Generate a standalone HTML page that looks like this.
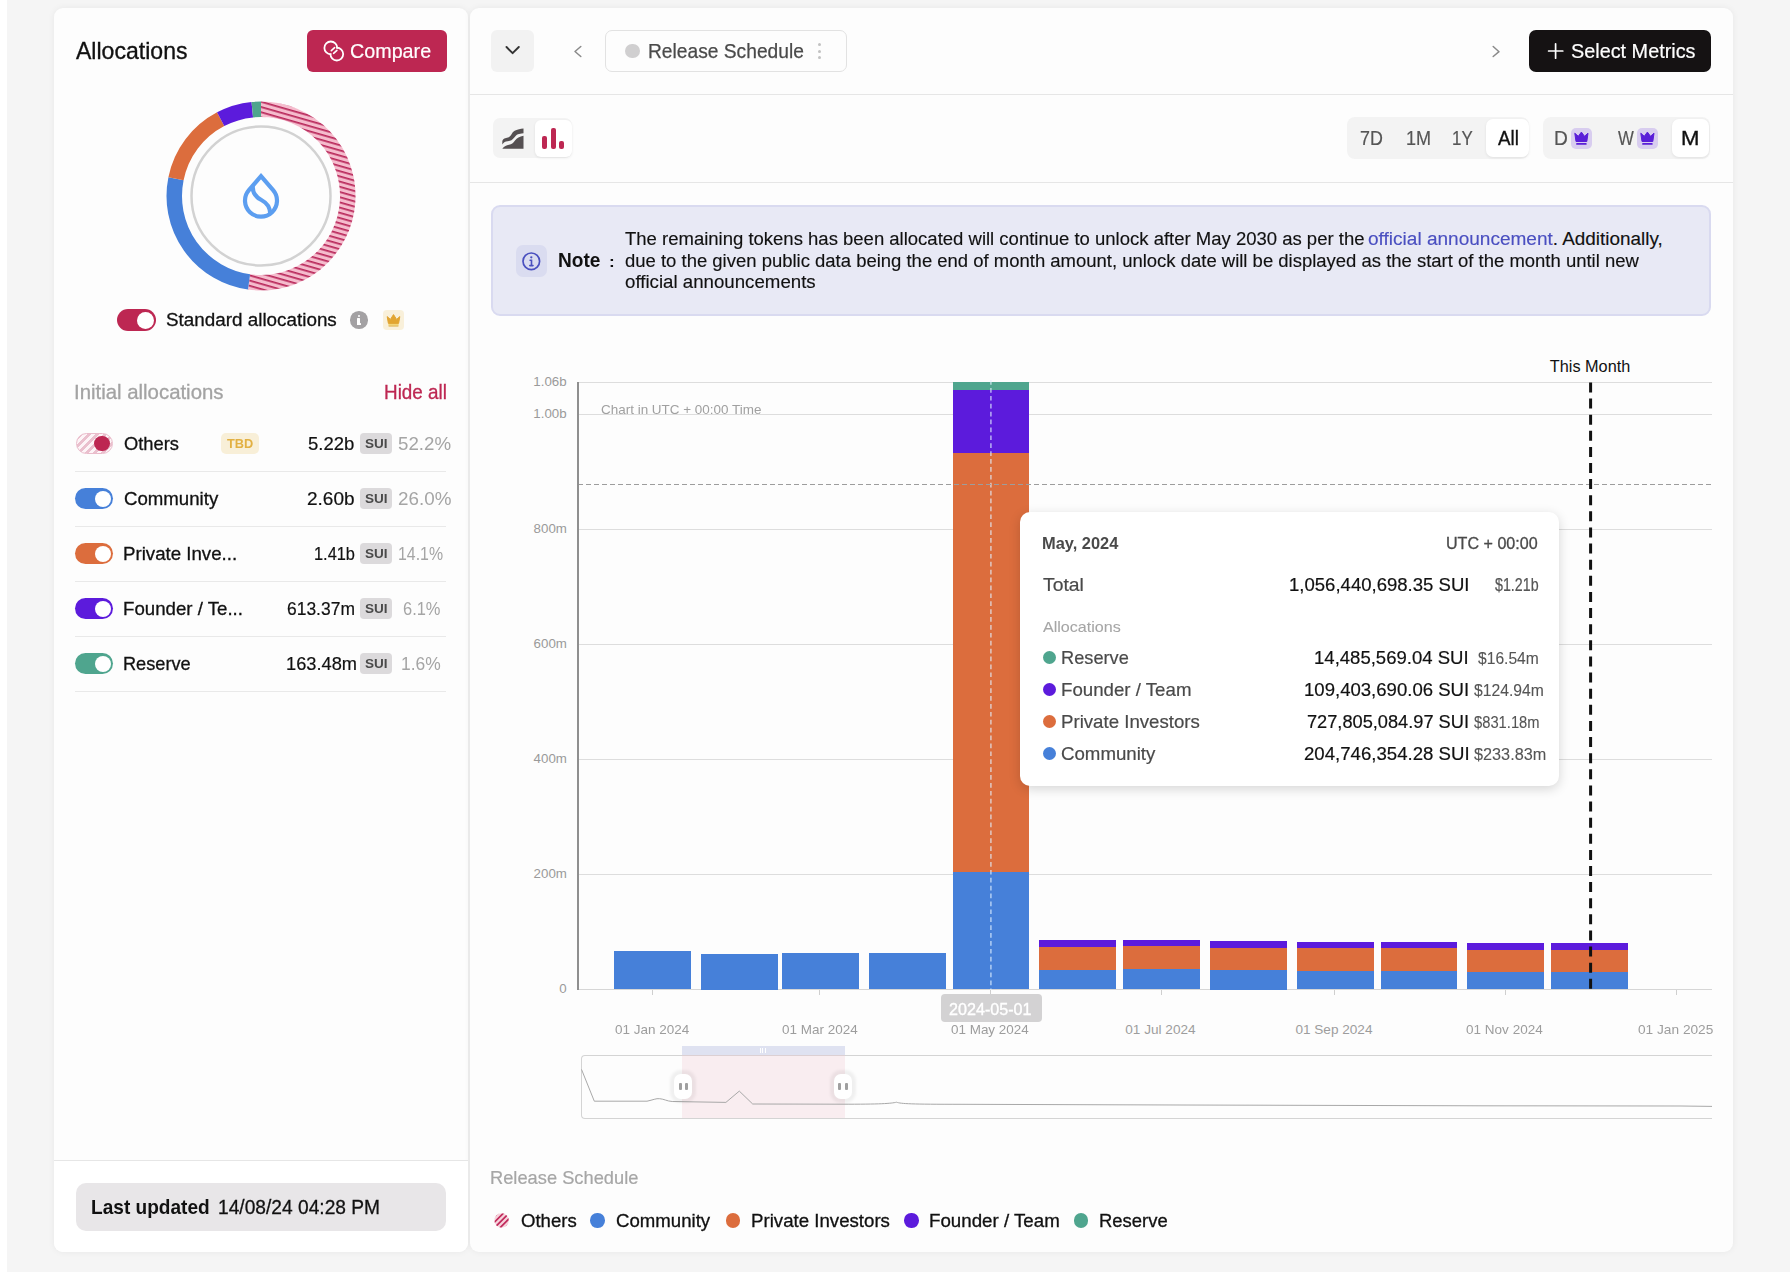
<!DOCTYPE html>
<html><head><meta charset="utf-8"><title>Allocations</title>
<style>
html,body{margin:0;padding:0;}
body{width:1790px;height:1272px;overflow:hidden;position:relative;background:#f5f5f5;font-family:"Liberation Sans",sans-serif;}
.t{position:absolute;white-space:nowrap;transform-origin:0 0;}
</style></head><body>
<div style="position:absolute;left:0.00px;top:0.00px;width:7.00px;height:1272.00px;z-index:0;background:#fff"></div><div style="position:absolute;left:53.60px;top:8.00px;width:414.40px;height:1244.00px;z-index:0;background:#fdfdfd;border-radius:9px;box-shadow:0 0 7px rgba(0,0,0,0.06)"></div><div style="position:absolute;left:53.60px;top:1160.00px;width:414.40px;height:92.00px;z-index:1;background:#fff;border-top:1px solid #e6e6e6;border-radius:0 0 9px 9px;box-sizing:border-box"></div><div style="position:absolute;left:470.00px;top:8.00px;width:1263.40px;height:1244.00px;z-index:0;background:#fdfdfd;border-radius:9px;box-shadow:0 0 7px rgba(0,0,0,0.06)"></div><div style="position:absolute;left:307.00px;top:30.00px;width:140.00px;height:42.00px;z-index:1;background:#bd2752;border-radius:6px"></div><svg style="position:absolute;left:320px;top:38px;z-index:3" width="26" height="26" viewBox="0 0 26 26">
<defs><mask id="mA" maskUnits="userSpaceOnUse" x="0" y="0" width="26" height="26"><rect width="26" height="26" fill="#fff"/><circle cx="16.8" cy="16.1" r="5.6" fill="#000"/></mask>
<mask id="mB" maskUnits="userSpaceOnUse" x="0" y="0" width="26" height="26"><rect width="26" height="26" fill="#fff"/><circle cx="10.8" cy="9.9" r="5.6" fill="#000"/></mask></defs>
<circle cx="10.8" cy="9.9" r="6.4" fill="none" stroke="#fff" stroke-width="1.8" mask="url(#mA)"/>
<circle cx="16.8" cy="16.1" r="6.4" fill="none" stroke="#fff" stroke-width="1.8" mask="url(#mB)"/>
<path d="M11.3 12.6 L14.6 9.6 M13.6 15.3 L16.9 12.3" stroke="#fff" stroke-width="1.6" stroke-linecap="round"/>
</svg><svg style="position:absolute;left:0;top:0;z-index:2" width="470" height="320" viewBox="0 0 470 320">
<defs><pattern id="hatch" patternUnits="userSpaceOnUse" width="5" height="5" patternTransform="rotate(16)">
<rect width="5" height="5" fill="#f5bccd"/><rect width="5" height="1.7" fill="#b8275a"/></pattern></defs>
<path d="M261.00 109.25 A86.75 86.75 0 1 1 249.05 281.92" fill="none" stroke="url(#hatch)" stroke-width="15.5"/><path d="M249.05 281.92 A86.75 86.75 0 0 1 176.00 178.68" fill="none" stroke="#4680d9" stroke-width="15.5"/><path d="M176.00 178.68 A86.75 86.75 0 0 1 220.65 119.21" fill="none" stroke="#dc6d3d" stroke-width="15.5"/><path d="M220.65 119.21 A86.75 86.75 0 0 1 252.29 109.69" fill="none" stroke="#5c1bdc" stroke-width="15.5"/><path d="M252.29 109.69 A86.75 86.75 0 0 1 261.00 109.25" fill="none" stroke="#4fa58e" stroke-width="15.5"/>
<circle cx="261" cy="196" r="69.5" fill="none" stroke="#d2d2d2" stroke-width="2.5"/>
<g transform="translate(243,173)" fill="none" stroke="#5c9ef0" stroke-width="4.2">
<path d="M18 3.2 L30.1 17.2 A16 16 0 1 1 5.9 17.2 Z" stroke-linejoin="miter" stroke-miterlimit="10"/>
<path d="M9.8 13.8 C9.6 20.5 12.5 24 18.4 27 C24.5 30.2 27 34 27.2 40.5" stroke-linecap="round"/>
</g>
</svg><div style="position:absolute;left:117.00px;top:309.00px;width:39.00px;height:22.00px;z-index:2;background:#bd2752;border-radius:11.0px"></div><div style="position:absolute;left:136.50px;top:311.50px;width:17.00px;height:17.00px;z-index:3;background:#fff;border-radius:50%"></div><div style="position:absolute;left:350.00px;top:311.20px;width:17.60px;height:17.60px;z-index:1;background:#a3a1a3;border-radius:50%"></div><div style="position:absolute;left:357.50px;top:314.60px;width:2.20px;height:2.20px;z-index:3;background:#fff;border-radius:50%"></div><div style="position:absolute;left:357.40px;top:318.20px;width:2.20px;height:6.40px;z-index:3;background:#fff;border-radius:0.5px"></div><div style="position:absolute;left:357.40px;top:323.20px;width:3.40px;height:1.40px;z-index:3;background:#fff;border-radius:0.5px"></div><div style="position:absolute;left:383.00px;top:309.50px;width:21.00px;height:20.50px;z-index:1;background:#f9f0da;border-radius:4px"></div><svg style="position:absolute;left:383px;top:309.5px;z-index:3" width="21" height="21" viewBox="0 0 21 21">
<path d="M4.2 6.6 L7.4 9.4 L10.5 4.6 L13.6 9.4 L16.8 6.6 L15.6 13.4 L5.4 13.4 Z" fill="#e2a531" stroke="#e2a531" stroke-width="1" stroke-linejoin="round"/>
<rect x="5.4" y="14.2" width="10.2" height="1.4" fill="#f1cf62"/><rect x="5.6" y="15.6" width="9.8" height="0.9" fill="#dca83a"/></svg><div style="position:absolute;left:75.50px;top:432.80px;width:37.30px;height:21.40px;z-index:2;background:repeating-linear-gradient(-45deg,#eac0ce 0 2.6px,#fdf4f7 2.6px 5.6px);border:1.6px solid #eabccb;border-radius:11px;box-sizing:border-box"></div><div style="position:absolute;left:94.30px;top:435.70px;width:15.60px;height:15.60px;z-index:3;background:#bd2752;border-radius:50%"></div><div style="position:absolute;left:360.10px;top:433.00px;width:32.20px;height:21.20px;z-index:1;background:#dcdadc;border-radius:4px"></div><div style="position:absolute;left:221.20px;top:433.40px;width:37.70px;height:20.90px;z-index:1;background:#f8efd8;border-radius:5px"></div><div style="position:absolute;left:75.00px;top:470.50px;width:371.00px;height:1.00px;z-index:1;background:#e9e9e9"></div><div style="position:absolute;left:75.20px;top:488.00px;width:37.80px;height:21.00px;z-index:2;background:#4680d9;border-radius:10.5px"></div><div style="position:absolute;left:94.50px;top:490.50px;width:16.00px;height:16.00px;z-index:3;background:#fff;border-radius:50%"></div><div style="position:absolute;left:360.10px;top:488.00px;width:32.20px;height:21.20px;z-index:1;background:#dcdadc;border-radius:4px"></div><div style="position:absolute;left:75.00px;top:525.50px;width:371.00px;height:1.00px;z-index:1;background:#e9e9e9"></div><div style="position:absolute;left:75.20px;top:543.00px;width:37.80px;height:21.00px;z-index:2;background:#dc6d3d;border-radius:10.5px"></div><div style="position:absolute;left:94.50px;top:545.50px;width:16.00px;height:16.00px;z-index:3;background:#fff;border-radius:50%"></div><div style="position:absolute;left:360.10px;top:543.00px;width:32.20px;height:21.20px;z-index:1;background:#dcdadc;border-radius:4px"></div><div style="position:absolute;left:75.00px;top:580.50px;width:371.00px;height:1.00px;z-index:1;background:#e9e9e9"></div><div style="position:absolute;left:75.20px;top:598.00px;width:37.80px;height:21.00px;z-index:2;background:#5c1bdc;border-radius:10.5px"></div><div style="position:absolute;left:94.50px;top:600.50px;width:16.00px;height:16.00px;z-index:3;background:#fff;border-radius:50%"></div><div style="position:absolute;left:360.10px;top:598.00px;width:32.20px;height:21.20px;z-index:1;background:#dcdadc;border-radius:4px"></div><div style="position:absolute;left:75.00px;top:635.50px;width:371.00px;height:1.00px;z-index:1;background:#e9e9e9"></div><div style="position:absolute;left:75.20px;top:653.00px;width:37.80px;height:21.00px;z-index:2;background:#4fa58e;border-radius:10.5px"></div><div style="position:absolute;left:94.50px;top:655.50px;width:16.00px;height:16.00px;z-index:3;background:#fff;border-radius:50%"></div><div style="position:absolute;left:360.10px;top:653.00px;width:32.20px;height:21.20px;z-index:1;background:#dcdadc;border-radius:4px"></div><div style="position:absolute;left:75.00px;top:690.50px;width:371.00px;height:1.00px;z-index:1;background:#e9e9e9"></div><div style="position:absolute;left:75.60px;top:1183.20px;width:370.90px;height:47.70px;z-index:2;background:#e8e6e8;border-radius:10px"></div><div style="position:absolute;left:470.00px;top:94.00px;width:1263.00px;height:1.00px;z-index:1;background:#e6e6e6"></div><div style="position:absolute;left:470.00px;top:181.50px;width:1263.00px;height:1.00px;z-index:1;background:#e6e6e6"></div><div style="position:absolute;left:491.00px;top:29.60px;width:43.00px;height:42.00px;z-index:1;background:#f2f2f2;border-radius:6px"></div><svg style="position:absolute;left:500px;top:40px;z-index:3" width="24" height="22" viewBox="0 0 24 22">
<path d="M6.5 7 L12.6 13.2 L18.8 7" fill="none" stroke="#333" stroke-width="1.9" stroke-linecap="round" stroke-linejoin="round"/></svg><svg style="position:absolute;left:568px;top:41px;z-index:3" width="20" height="20" viewBox="0 0 20 20">
<path d="M12.8 5.5 L7 10.5 L12.8 15.5" fill="none" stroke="#8a8a8a" stroke-width="1.5" stroke-linecap="round" stroke-linejoin="round"/></svg><svg style="position:absolute;left:1486px;top:41px;z-index:3" width="20" height="20" viewBox="0 0 20 20">
<path d="M7.2 5.5 L13 10.7 L7.2 15.5" fill="none" stroke="#8a8a8a" stroke-width="1.5" stroke-linecap="round" stroke-linejoin="round"/></svg><div style="position:absolute;left:604.80px;top:30.00px;width:242.40px;height:41.60px;z-index:1;border:1px solid #e2e2e2;border-radius:7px;box-sizing:border-box;background:#fdfdfd"></div><div style="position:absolute;left:625.40px;top:44.10px;width:14.20px;height:14.20px;z-index:1;background:#d0cfd0;border-radius:50%"></div><div style="position:absolute;left:817.80px;top:43.30px;width:3.00px;height:3.00px;z-index:1;background:#c2c2c2;border-radius:50%"></div><div style="position:absolute;left:817.80px;top:49.70px;width:3.00px;height:3.00px;z-index:1;background:#c2c2c2;border-radius:50%"></div><div style="position:absolute;left:817.80px;top:56.10px;width:3.00px;height:3.00px;z-index:1;background:#c2c2c2;border-radius:50%"></div><div style="position:absolute;left:1528.80px;top:29.90px;width:182.60px;height:42.10px;z-index:1;background:#151213;border-radius:7px"></div><svg style="position:absolute;left:1546px;top:41px;z-index:3" width="20" height="20" viewBox="0 0 20 20">
<path d="M9.6 2.8 V17.2 M2.6 10 H16.8" stroke="#fff" stroke-width="1.7" stroke-linecap="round"/></svg><div style="position:absolute;left:492.70px;top:117.70px;width:79.30px;height:40.30px;z-index:1;background:#f3f3f3;border-radius:7px"></div><div style="position:absolute;left:534.50px;top:119.80px;width:37.00px;height:36.80px;z-index:2;background:#fff;border-radius:6px;box-shadow:0 1px 3px rgba(0,0,0,0.08)"></div><svg style="position:absolute;left:500px;top:126px;z-index:3" width="26" height="25" viewBox="0 0 26 25">
<path d="M2.3 16.2 C2.3 13 4.5 12.2 7 11.8 C9.5 11.3 10 10.5 12 7.5 C14 4.5 16.5 3.5 23.5 2.6 L23.5 7.3 C18.5 7.8 16.8 8.2 14.3 11.6 C12.3 14.3 10.5 15 7.6 15.3 C5.2 15.6 4 16.2 2.3 18.5 Z" fill="#555052"/>
<path d="M2.3 22.8 C4.5 20 6.3 19.3 9 18.8 C11.8 18.3 13 17.2 15 14.6 C17 12 19.5 10.5 23.5 9.8 L23.5 22.8 Z" fill="#555052"/></svg><div style="position:absolute;left:542.30px;top:136.00px;width:4.90px;height:12.80px;z-index:3;background:#bd2752;border-radius:2px"></div><div style="position:absolute;left:550.50px;top:127.60px;width:5.00px;height:21.20px;z-index:3;background:#bd2752;border-radius:2px"></div><div style="position:absolute;left:558.50px;top:141.00px;width:5.50px;height:7.80px;z-index:3;background:#bd2752;border-radius:2px"></div><div style="position:absolute;left:1347.40px;top:117.30px;width:181.60px;height:41.80px;z-index:1;background:#f3f3f3;border-radius:8px"></div><div style="position:absolute;left:1486.00px;top:119.40px;width:42.50px;height:37.60px;z-index:2;background:#fff;border-radius:7px;box-shadow:0 1px 3px rgba(0,0,0,0.08)"></div><div style="position:absolute;left:1542.70px;top:117.30px;width:167.10px;height:41.80px;z-index:1;background:#f3f3f3;border-radius:8px"></div><div style="position:absolute;left:1671.60px;top:119.40px;width:37.30px;height:37.60px;z-index:2;background:#fff;border-radius:7px;box-shadow:0 1px 3px rgba(0,0,0,0.08)"></div><div style="position:absolute;left:1571.40px;top:128.30px;width:20.80px;height:20.30px;z-index:2;background:#d8cdef;border-radius:5px"></div><svg style="position:absolute;left:1571.4px;top:128.3px;z-index:3" width="21" height="21" viewBox="0 0 21 21">
<path d="M3.8 5.2 L7.3 8.3 L10.4 4.1 L13.5 8.3 L17 5.2 L15.8 13.5 L5 13.5 Z" fill="#5a1ed8" stroke="#5a1ed8" stroke-width="1" stroke-linejoin="round"/>
<rect x="5.2" y="14.9" width="10.4" height="1.8" rx="0.5" fill="#5a1ed8"/></svg><div style="position:absolute;left:1637.20px;top:128.30px;width:20.80px;height:20.30px;z-index:2;background:#d8cdef;border-radius:5px"></div><svg style="position:absolute;left:1637.2px;top:128.3px;z-index:3" width="21" height="21" viewBox="0 0 21 21">
<path d="M3.8 5.2 L7.3 8.3 L10.4 4.1 L13.5 8.3 L17 5.2 L15.8 13.5 L5 13.5 Z" fill="#5a1ed8" stroke="#5a1ed8" stroke-width="1" stroke-linejoin="round"/>
<rect x="5.2" y="14.9" width="10.4" height="1.8" rx="0.5" fill="#5a1ed8"/></svg><div style="position:absolute;left:491.40px;top:204.70px;width:1220.10px;height:111.80px;z-index:1;background:#e8e9f5;border:2px solid #d9daf0;border-radius:9px;box-sizing:border-box"></div><div style="position:absolute;left:515.70px;top:245.00px;width:31.60px;height:31.80px;z-index:2;background:#dadcf0;border-radius:7px"></div><svg style="position:absolute;left:521px;top:251px;z-index:3" width="21" height="21" viewBox="0 0 21 21">
<circle cx="10.3" cy="10.3" r="8.3" fill="none" stroke="#4a50bf" stroke-width="1.7"/>
<circle cx="10.3" cy="6.3" r="1.15" fill="#4a50bf"/>
<path d="M9.1 9.2 H10.5 V14.6 M8.8 14.6 H12" fill="none" stroke="#4a50bf" stroke-width="1.6" stroke-linecap="round"/></svg><div style="position:absolute;left:578.00px;top:381.55px;width:1133.60px;height:1.30px;z-index:1;background:#dddddd"></div><div style="position:absolute;left:578.00px;top:413.85px;width:1133.60px;height:1.30px;z-index:1;background:#dddddd"></div><div style="position:absolute;left:578.00px;top:528.85px;width:1133.60px;height:1.30px;z-index:1;background:#dddddd"></div><div style="position:absolute;left:578.00px;top:643.85px;width:1133.60px;height:1.30px;z-index:1;background:#dddddd"></div><div style="position:absolute;left:578.00px;top:758.85px;width:1133.60px;height:1.30px;z-index:1;background:#dddddd"></div><div style="position:absolute;left:578.00px;top:873.85px;width:1133.60px;height:1.30px;z-index:1;background:#dddddd"></div><div style="position:absolute;left:578.00px;top:989.00px;width:1133.60px;height:1.20px;z-index:1;background:#d6d6d6"></div><div style="position:absolute;left:577.20px;top:381.90px;width:1.60px;height:608.10px;z-index:4;background:#8f8f8f"></div><div style="position:absolute;left:651.70px;top:990.00px;width:1.00px;height:5.00px;z-index:1;background:#cfcfcf"></div><div style="position:absolute;left:819.20px;top:990.00px;width:1.00px;height:5.00px;z-index:1;background:#cfcfcf"></div><div style="position:absolute;left:990.00px;top:990.00px;width:1.00px;height:5.00px;z-index:1;background:#cfcfcf"></div><div style="position:absolute;left:1161.40px;top:990.00px;width:1.00px;height:5.00px;z-index:1;background:#cfcfcf"></div><div style="position:absolute;left:1333.50px;top:990.00px;width:1.00px;height:5.00px;z-index:1;background:#cfcfcf"></div><div style="position:absolute;left:1504.50px;top:990.00px;width:1.00px;height:5.00px;z-index:1;background:#cfcfcf"></div><div style="position:absolute;left:1675.50px;top:990.00px;width:1.00px;height:5.00px;z-index:1;background:#cfcfcf"></div><div style="position:absolute;left:614.20px;top:951.10px;width:76.90px;height:38.40px;z-index:2;background:linear-gradient(to bottom,#4680d9 0.00px 38.40px)"></div><div style="position:absolute;left:701.10px;top:954.00px;width:76.60px;height:35.50px;z-index:2;background:linear-gradient(to bottom,#4680d9 0.00px 35.50px)"></div><div style="position:absolute;left:782.20px;top:952.70px;width:76.90px;height:36.80px;z-index:2;background:linear-gradient(to bottom,#4680d9 0.00px 36.80px)"></div><div style="position:absolute;left:868.80px;top:953.40px;width:76.90px;height:36.10px;z-index:2;background:linear-gradient(to bottom,#4680d9 0.00px 36.10px)"></div><div style="position:absolute;left:952.80px;top:381.80px;width:76.60px;height:607.70px;z-index:2;background:linear-gradient(to bottom,#4fa58e 0.00px 8.20px,#5c1bdc 8.20px 71.10px,#dc6d3d 71.10px 490.00px,#4680d9 490.00px 607.70px)"></div><div style="position:absolute;left:1039.20px;top:939.60px;width:77.10px;height:49.90px;z-index:2;background:linear-gradient(to bottom,#5c1bdc 0.00px 7.20px,#dc6d3d 7.20px 29.80px,#4680d9 29.80px 49.90px)"></div><div style="position:absolute;left:1123.30px;top:940.10px;width:76.80px;height:49.40px;z-index:2;background:linear-gradient(to bottom,#5c1bdc 0.00px 6.40px,#dc6d3d 6.40px 29.00px,#4680d9 29.00px 49.40px)"></div><div style="position:absolute;left:1210.20px;top:941.00px;width:76.50px;height:48.50px;z-index:2;background:linear-gradient(to bottom,#5c1bdc 0.00px 6.70px,#dc6d3d 6.70px 29.30px,#4680d9 29.30px 48.50px)"></div><div style="position:absolute;left:1296.70px;top:941.60px;width:76.90px;height:47.90px;z-index:2;background:linear-gradient(to bottom,#5c1bdc 0.00px 6.50px,#dc6d3d 6.50px 28.80px,#4680d9 28.80px 47.90px)"></div><div style="position:absolute;left:1380.80px;top:941.60px;width:76.60px;height:47.90px;z-index:2;background:linear-gradient(to bottom,#5c1bdc 0.00px 6.50px,#dc6d3d 6.50px 28.80px,#4680d9 28.80px 47.90px)"></div><div style="position:absolute;left:1467.30px;top:942.80px;width:76.80px;height:46.70px;z-index:2;background:linear-gradient(to bottom,#5c1bdc 0.00px 6.50px,#dc6d3d 6.50px 28.80px,#4680d9 28.80px 46.70px)"></div><div style="position:absolute;left:1551.30px;top:942.80px;width:76.90px;height:46.70px;z-index:2;background:linear-gradient(to bottom,#5c1bdc 0.00px 6.50px,#dc6d3d 6.50px 28.80px,#4680d9 28.80px 46.70px)"></div><svg style="position:absolute;left:985px;top:380px;z-index:3" width="12" height="612" viewBox="0 0 12 612">
<line x1="5.9" y1="0.1" x2="5.9" y2="610" stroke="rgba(225,240,255,0.62)" stroke-width="1.7" stroke-dasharray="4.7 3.2"/></svg><svg style="position:absolute;left:578px;top:480px;z-index:3" width="1134" height="10" viewBox="0 0 1134 10">
<line x1="0" y1="4.5" x2="1134" y2="4.5" stroke="#9d9d9d" stroke-width="1.2" stroke-dasharray="5 3"/></svg><svg style="position:absolute;left:1584px;top:376px;z-index:4" width="14" height="620" viewBox="0 0 14 620">
<line x1="6.6" y1="6.4" x2="6.6" y2="613.5" stroke="#111" stroke-width="3" stroke-dasharray="10 6.12"/></svg><div style="position:absolute;left:940.50px;top:993.90px;width:101.10px;height:28.60px;z-index:5;background:#d3d2d3;border-radius:4px"></div><div style="position:absolute;left:1020.40px;top:511.90px;width:539.10px;height:274.10px;z-index:8;background:#fff;border-radius:10px;box-shadow:0 3px 12px rgba(0,0,0,0.16)"></div><div style="position:absolute;left:1042.80px;top:650.70px;width:13.30px;height:13.20px;z-index:9;background:#4fa58e;border-radius:50%"></div><div style="position:absolute;left:1042.80px;top:682.90px;width:13.30px;height:13.20px;z-index:9;background:#5c1bdc;border-radius:50%"></div><div style="position:absolute;left:1042.80px;top:715.10px;width:13.30px;height:13.20px;z-index:9;background:#dc6d3d;border-radius:50%"></div><div style="position:absolute;left:1042.80px;top:747.30px;width:13.30px;height:13.20px;z-index:9;background:#4680d9;border-radius:50%"></div><div style="position:absolute;left:581.40px;top:1054.60px;width:1130.20px;height:64.10px;z-index:1;border:1.2px solid #d4d4d4;border-right:none;border-radius:4px 0 0 4px;box-sizing:border-box"></div><div style="position:absolute;left:682.00px;top:1045.90px;width:162.80px;height:9.20px;z-index:2;background:#dfe2f1"></div><div style="position:absolute;left:682.00px;top:1055.10px;width:162.80px;height:62.90px;z-index:2;background:rgba(240,196,210,0.28)"></div><svg style="position:absolute;left:581px;top:1060px;z-index:3" width="1131" height="55" viewBox="0 0 1131 55">
<path d="M0.5 9.4 L13.3 41.2 L66 41.2 C72 40 75 38.2 78.7 38.7 C83 39 86 41.2 91.2 41.5 L144.9 42.4 L158.3 31.1 L171.7 44 L260 44.2 C300 44.3 310 43.5 315.5 42.2 C320 43.8 330 44.3 380 44.3 L600 45 L900 45.8 L1100 46 L1131 46.4" fill="none" stroke="#a8a8a8" stroke-width="1"/></svg><div style="position:absolute;left:674.30px;top:1074.30px;width:17.80px;height:24.60px;z-index:4;background:#fff;border-radius:7px;box-shadow:0 0 3px 4px rgba(0,0,0,0.055)"></div><div style="position:absolute;left:678.80px;top:1082.90px;width:3.00px;height:6.90px;z-index:5;background:#a0a0a0;border-radius:1px"></div><div style="position:absolute;left:684.90px;top:1082.90px;width:3.00px;height:6.90px;z-index:5;background:#a0a0a0;border-radius:1px"></div><div style="position:absolute;left:833.90px;top:1074.30px;width:17.80px;height:24.60px;z-index:4;background:#fff;border-radius:7px;box-shadow:0 0 3px 4px rgba(0,0,0,0.055)"></div><div style="position:absolute;left:838.40px;top:1082.90px;width:3.00px;height:6.90px;z-index:5;background:#a0a0a0;border-radius:1px"></div><div style="position:absolute;left:844.50px;top:1082.90px;width:3.00px;height:6.90px;z-index:5;background:#a0a0a0;border-radius:1px"></div><div style="position:absolute;left:760.00px;top:1047.50px;width:1.10px;height:5.00px;z-index:3;background:#fff"></div><div style="position:absolute;left:762.30px;top:1047.50px;width:1.10px;height:5.00px;z-index:3;background:#fff"></div><div style="position:absolute;left:764.60px;top:1047.50px;width:1.10px;height:5.00px;z-index:3;background:#fff"></div><svg style="position:absolute;left:494px;top:1213px;z-index:3" width="16" height="16" viewBox="0 0 16 16">
<defs><clipPath id="lc"><circle cx="7.6" cy="7.5" r="7.2"/></clipPath></defs>
<g clip-path="url(#lc)"><rect width="16" height="16" fill="#f6d3dc"/><g stroke="#c0285a" stroke-width="1.7">
<line x1="-4" y1="8" x2="8" y2="-4"/><line x1="-1.2" y1="10.8" x2="10.8" y2="-1.2"/><line x1="1.6" y1="13.6" x2="13.6" y2="1.6"/><line x1="4.4" y1="16.4" x2="16.4" y2="4.4"/><line x1="7.2" y1="19.2" x2="19.2" y2="7.2"/><line x1="10" y1="22" x2="22" y2="10"/></g></g></svg><div style="position:absolute;left:590.40px;top:1213.30px;width:14.30px;height:14.30px;z-index:1;background:#4680d9;border-radius:50%"></div><div style="position:absolute;left:725.80px;top:1213.30px;width:14.30px;height:14.30px;z-index:1;background:#dc6d3d;border-radius:50%"></div><div style="position:absolute;left:904.30px;top:1213.30px;width:14.30px;height:14.30px;z-index:1;background:#5c1bdc;border-radius:50%"></div><div style="position:absolute;left:1073.60px;top:1213.30px;width:14.30px;height:14.30px;z-index:1;background:#4fa58e;border-radius:50%"></div>
<div class="t" style="left:75.60px;top:39.10px;font-size:24.71px;line-height:24.71px;color:#111;font-weight:normal;-webkit-text-stroke:0.35px #111;transform:scaleX(0.9331);z-index:5">Allocations</div><div class="t" style="left:349.56px;top:40.00px;font-size:21.08px;line-height:21.08px;color:#fff;font-weight:normal;-webkit-text-stroke:0.2px #fff;transform:scaleX(0.9356);z-index:5">Compare</div><div class="t" style="left:166.20px;top:310.70px;font-size:18.75px;line-height:18.75px;color:#111;font-weight:normal;-webkit-text-stroke:0.3px #111;transform:scaleX(1.0052);z-index:5">Standard allocations</div><div class="t" style="left:73.82px;top:383.00px;font-size:19.48px;line-height:19.48px;color:#a3a3a3;font-weight:normal;-webkit-text-stroke:0.3px #a3a3a3;transform:scaleX(1.0465);z-index:5">Initial allocations</div><div class="t" style="left:384.35px;top:383.00px;font-size:19.48px;line-height:19.48px;color:#bd2752;font-weight:normal;-webkit-text-stroke:0.3px #bd2752;transform:scaleX(0.9691);z-index:5">Hide all</div><div class="t" style="left:124.01px;top:434.60px;font-size:18.46px;line-height:18.46px;color:#111;font-weight:normal;-webkit-text-stroke:0.3px #111;transform:scaleX(0.9933);z-index:5">Others</div><div class="t" style="left:308.19px;top:434.60px;font-size:18.17px;line-height:18.17px;color:#111;font-weight:normal;-webkit-text-stroke:0.2px #111;transform:scaleX(1.0214);z-index:5">5.22b</div><div class="t" style="left:365.39px;top:437.00px;font-size:13.08px;line-height:13.08px;color:#4a4a4a;font-weight:bold;transform:scaleX(1.0353);z-index:6">SUI</div><div class="t" style="left:398.48px;top:434.60px;font-size:18.17px;line-height:18.17px;color:#a5a5a5;font-weight:normal;transform:scaleX(1.0307);z-index:5">52.2%</div><div class="t" style="left:226.91px;top:437.00px;font-size:13.52px;line-height:13.52px;color:#e2b042;font-weight:bold;transform:scaleX(0.9441);z-index:5">TBD</div><div class="t" style="left:123.89px;top:489.60px;font-size:18.46px;line-height:18.46px;color:#111;font-weight:normal;-webkit-text-stroke:0.3px #111;transform:scaleX(1.0108);z-index:5">Community</div><div class="t" style="left:307.06px;top:489.60px;font-size:18.17px;line-height:18.17px;color:#111;font-weight:normal;-webkit-text-stroke:0.2px #111;transform:scaleX(1.0465);z-index:5">2.60b</div><div class="t" style="left:365.39px;top:492.00px;font-size:13.08px;line-height:13.08px;color:#4a4a4a;font-weight:bold;transform:scaleX(1.0353);z-index:6">SUI</div><div class="t" style="left:398.27px;top:489.60px;font-size:18.17px;line-height:18.17px;color:#a5a5a5;font-weight:normal;transform:scaleX(1.0368);z-index:5">26.0%</div><div class="t" style="left:123.28px;top:544.60px;font-size:18.46px;line-height:18.46px;color:#111;font-weight:normal;-webkit-text-stroke:0.3px #111;transform:scaleX(1.0126);z-index:5">Private Inve...</div><div class="t" style="left:313.53px;top:544.60px;font-size:18.17px;line-height:18.17px;color:#111;font-weight:normal;-webkit-text-stroke:0.2px #111;transform:scaleX(0.9020);z-index:5">1.41b</div><div class="t" style="left:365.39px;top:547.00px;font-size:13.08px;line-height:13.08px;color:#4a4a4a;font-weight:bold;transform:scaleX(1.0353);z-index:6">SUI</div><div class="t" style="left:398.06px;top:544.60px;font-size:18.17px;line-height:18.17px;color:#a5a5a5;font-weight:normal;transform:scaleX(0.8740);z-index:5">14.1%</div><div class="t" style="left:123.28px;top:599.60px;font-size:18.46px;line-height:18.46px;color:#111;font-weight:normal;-webkit-text-stroke:0.3px #111;transform:scaleX(1.0122);z-index:5">Founder / Te...</div><div class="t" style="left:287.03px;top:599.60px;font-size:18.17px;line-height:18.17px;color:#111;font-weight:normal;-webkit-text-stroke:0.2px #111;transform:scaleX(0.9612);z-index:5">613.37m</div><div class="t" style="left:365.39px;top:602.00px;font-size:13.08px;line-height:13.08px;color:#4a4a4a;font-weight:bold;transform:scaleX(1.0353);z-index:6">SUI</div><div class="t" style="left:402.88px;top:599.60px;font-size:18.17px;line-height:18.17px;color:#a5a5a5;font-weight:normal;transform:scaleX(0.9060);z-index:5">6.1%</div><div class="t" style="left:123.32px;top:654.60px;font-size:18.46px;line-height:18.46px;color:#111;font-weight:normal;-webkit-text-stroke:0.3px #111;transform:scaleX(0.9855);z-index:5">Reserve</div><div class="t" style="left:286.19px;top:654.60px;font-size:18.17px;line-height:18.17px;color:#111;font-weight:normal;-webkit-text-stroke:0.2px #111;transform:scaleX(1.0049);z-index:5">163.48m</div><div class="t" style="left:365.39px;top:657.00px;font-size:13.08px;line-height:13.08px;color:#4a4a4a;font-weight:bold;transform:scaleX(1.0353);z-index:6">SUI</div><div class="t" style="left:400.65px;top:654.60px;font-size:18.17px;line-height:18.17px;color:#a5a5a5;font-weight:normal;transform:scaleX(0.9607);z-index:5">1.6%</div><div class="t" style="left:90.80px;top:1197.00px;font-size:20.64px;line-height:20.64px;color:#111;font-weight:bold;transform:scaleX(0.9252);z-index:6">Last updated</div><div class="t" style="left:218.01px;top:1197.00px;font-size:20.64px;line-height:20.64px;color:#111;font-weight:normal;-webkit-text-stroke:0.3px #111;transform:scaleX(0.9299);z-index:6">14/08/24 04:28 PM</div><div class="t" style="left:647.84px;top:41.20px;font-size:20.93px;line-height:20.93px;color:#4a4a4a;font-weight:normal;-webkit-text-stroke:0.25px #4a4a4a;transform:scaleX(0.9179);z-index:5">Release Schedule</div><div class="t" style="left:1571.22px;top:41.00px;font-size:20.35px;line-height:20.35px;color:#fff;font-weight:normal;-webkit-text-stroke:0.2px #fff;transform:scaleX(0.9747);z-index:5">Select Metrics</div><div class="t" style="left:1359.92px;top:127.90px;font-size:20.35px;line-height:20.35px;color:#555;font-weight:normal;-webkit-text-stroke:0.2px #555;transform:scaleX(0.8791);z-index:5">7D</div><div class="t" style="left:1405.57px;top:127.90px;font-size:20.35px;line-height:20.35px;color:#555;font-weight:normal;-webkit-text-stroke:0.2px #555;transform:scaleX(0.8879);z-index:5">1M</div><div class="t" style="left:1452.36px;top:127.90px;font-size:20.35px;line-height:20.35px;color:#555;font-weight:normal;-webkit-text-stroke:0.2px #555;transform:scaleX(0.8299);z-index:5">1Y</div><div class="t" style="left:1497.50px;top:127.90px;font-size:20.35px;line-height:20.35px;color:#111;font-weight:normal;-webkit-text-stroke:0.35px #111;transform:scaleX(0.9252);z-index:5">All</div><div class="t" style="left:1554.49px;top:127.90px;font-size:20.35px;line-height:20.35px;color:#555;font-weight:normal;-webkit-text-stroke:0.2px #555;transform:scaleX(0.9426);z-index:5">D</div><div class="t" style="left:1617.60px;top:127.90px;font-size:20.35px;line-height:20.35px;color:#555;font-weight:normal;-webkit-text-stroke:0.2px #555;transform:scaleX(0.8229);z-index:5">W</div><div class="t" style="left:1681.06px;top:127.90px;font-size:20.35px;line-height:20.35px;color:#111;font-weight:normal;-webkit-text-stroke:0.35px #111;transform:scaleX(1.0876);z-index:5">M</div><div class="t" style="left:557.95px;top:251.40px;font-size:19.91px;line-height:19.91px;color:#111;font-weight:bold;transform:scaleX(0.9604);z-index:5">Note</div><div class="t" style="left:608.86px;top:255.40px;font-size:14.53px;line-height:14.53px;color:#111;font-weight:bold;transform:scaleX(1.1818);z-index:5">:</div><div class="t" style="left:625.01px;top:230.30px;font-size:18.90px;line-height:18.90px;color:#111;font-weight:normal;-webkit-text-stroke:0.15px #111;transform:scaleX(0.9794);z-index:5">The remaining tokens has been allocated will continue to unlock after May 2030 as per the</div><div class="t" style="left:1368.09px;top:230.30px;font-size:18.90px;line-height:18.90px;color:#4a4fc0;font-weight:normal;-webkit-text-stroke:0.15px #4a4fc0;transform:scaleX(1.0076);z-index:5">official announcement</div><div class="t" style="left:1552.80px;top:230.30px;font-size:18.90px;line-height:18.90px;color:#111;font-weight:normal;-webkit-text-stroke:0.15px #111;z-index:5">. Additionally,</div><div class="t" style="left:624.72px;top:251.70px;font-size:18.90px;line-height:18.90px;color:#111;font-weight:normal;-webkit-text-stroke:0.15px #111;transform:scaleX(0.9781);z-index:5">due to the given public data being the end of month amount, unlock date will be displayed as the start of the month until new</div><div class="t" style="left:624.71px;top:273.00px;font-size:18.90px;line-height:18.90px;color:#111;font-weight:normal;-webkit-text-stroke:0.15px #111;transform:scaleX(0.9887);z-index:5">official announcements</div><div class="t" style="left:533.31px;top:374.80px;font-size:13.30px;line-height:13.30px;color:#9a9a9a;font-weight:normal;z-index:5">1.06b</div><div class="t" style="left:533.31px;top:407.20px;font-size:13.30px;line-height:13.30px;color:#9a9a9a;font-weight:normal;z-index:5">1.00b</div><div class="t" style="left:533.61px;top:522.20px;font-size:13.30px;line-height:13.30px;color:#9a9a9a;font-weight:normal;z-index:5">800m</div><div class="t" style="left:533.61px;top:637.20px;font-size:13.30px;line-height:13.30px;color:#9a9a9a;font-weight:normal;z-index:5">600m</div><div class="t" style="left:533.61px;top:752.20px;font-size:13.30px;line-height:13.30px;color:#9a9a9a;font-weight:normal;z-index:5">400m</div><div class="t" style="left:533.61px;top:867.20px;font-size:13.30px;line-height:13.30px;color:#9a9a9a;font-weight:normal;z-index:5">200m</div><div class="t" style="left:559.20px;top:982.20px;font-size:13.30px;line-height:13.30px;color:#9a9a9a;font-weight:normal;z-index:5">0</div><div class="t" style="left:601.19px;top:403.30px;font-size:13.30px;line-height:13.30px;color:#a0a0a0;font-weight:normal;transform:scaleX(1.0121);z-index:2">Chart in UTC + 00:00 Time</div><div class="t" style="left:1549.80px;top:358.40px;font-size:16.28px;line-height:16.28px;color:#111;font-weight:normal;z-index:5">This Month</div><div class="t" style="left:614.50px;top:1023.00px;font-size:13.60px;line-height:13.60px;color:#9d9d9d;font-weight:normal;transform:scaleX(0.9932);z-index:2">01 Jan 2024</div><div class="t" style="left:781.70px;top:1023.00px;font-size:13.60px;line-height:13.60px;color:#9d9d9d;font-weight:normal;transform:scaleX(0.9908);z-index:2">01 Mar 2024</div><div class="t" style="left:951.01px;top:1023.00px;font-size:13.60px;line-height:13.60px;color:#9d9d9d;font-weight:normal;transform:scaleX(0.9888);z-index:2">01 May 2024</div><div class="t" style="left:1125.30px;top:1023.00px;font-size:13.60px;line-height:13.60px;color:#9d9d9d;font-weight:normal;z-index:2">01 Jul 2024</div><div class="t" style="left:1295.40px;top:1023.00px;font-size:13.60px;line-height:13.60px;color:#9d9d9d;font-weight:normal;z-index:2">01 Sep 2024</div><div class="t" style="left:1466.30px;top:1023.00px;font-size:13.60px;line-height:13.60px;color:#9d9d9d;font-weight:normal;transform:scaleX(0.9953);z-index:2">01 Nov 2024</div><div class="t" style="left:1637.60px;top:1023.00px;font-size:13.60px;line-height:13.60px;color:#9d9d9d;font-weight:normal;transform:scaleX(1.0067);z-index:2">01 Jan 2025</div><div class="t" style="left:949.49px;top:1001.50px;font-size:15.99px;line-height:15.99px;color:#fff;font-weight:normal;-webkit-text-stroke:0.35px #fff;transform:scaleX(1.0089);z-index:6">2024-05-01</div><div class="t" style="left:1042.39px;top:534.80px;font-size:16.28px;line-height:16.28px;color:#4a4a4a;font-weight:bold;transform:scaleX(1.0085);z-index:9">May, 2024</div><div class="t" style="left:1446.49px;top:535.80px;font-size:15.99px;line-height:15.99px;color:#4a4a4a;font-weight:normal;-webkit-text-stroke:0.3px #4a4a4a;transform:scaleX(1.0068);z-index:9">UTC + 00:00</div><div class="t" style="left:1042.99px;top:576.00px;font-size:18.90px;line-height:18.90px;color:#4a4a4a;font-weight:normal;-webkit-text-stroke:0.2px #4a4a4a;transform:scaleX(1.0232);z-index:9">Total</div><div class="t" style="left:1288.59px;top:576.00px;font-size:18.46px;line-height:18.46px;color:#111;font-weight:normal;-webkit-text-stroke:0.2px #111;transform:scaleX(1.0059);z-index:9">1,056,440,698.35 SUI</div><div class="t" style="left:1494.62px;top:577.00px;font-size:17.44px;line-height:17.44px;color:#555;font-weight:normal;-webkit-text-stroke:0.2px #555;transform:scaleX(0.8165);z-index:9">$1.21b</div><div class="t" style="left:1043.40px;top:618.70px;font-size:15.55px;line-height:15.55px;color:#a6a6a6;font-weight:normal;-webkit-text-stroke:0.1px #a6a6a6;transform:scaleX(1.0344);z-index:9">Allocations</div><div class="t" style="left:1060.91px;top:648.60px;font-size:18.31px;line-height:18.31px;color:#4a4a4a;font-weight:normal;-webkit-text-stroke:0.2px #4a4a4a;transform:scaleX(0.9954);z-index:9">Reserve</div><div class="t" style="left:1314.43px;top:648.60px;font-size:18.90px;line-height:18.90px;color:#111;font-weight:normal;-webkit-text-stroke:0.2px #111;transform:scaleX(0.9817);z-index:9">14,485,569.04 SUI</div><div class="t" style="left:1477.61px;top:650.60px;font-size:16.72px;line-height:16.72px;color:#555;font-weight:normal;-webkit-text-stroke:0.1px #555;transform:scaleX(0.9355);z-index:9">$16.54m</div><div class="t" style="left:1060.87px;top:680.75px;font-size:18.31px;line-height:18.31px;color:#4a4a4a;font-weight:normal;-webkit-text-stroke:0.2px #4a4a4a;transform:scaleX(1.0207);z-index:9">Founder / Team</div><div class="t" style="left:1303.92px;top:680.75px;font-size:18.90px;line-height:18.90px;color:#111;font-weight:normal;-webkit-text-stroke:0.2px #111;transform:scaleX(0.9829);z-index:9">109,403,690.06 SUI</div><div class="t" style="left:1473.71px;top:682.75px;font-size:16.72px;line-height:16.72px;color:#555;font-weight:normal;-webkit-text-stroke:0.1px #555;transform:scaleX(0.9397);z-index:9">$124.94m</div><div class="t" style="left:1060.87px;top:712.90px;font-size:18.31px;line-height:18.31px;color:#4a4a4a;font-weight:normal;-webkit-text-stroke:0.2px #4a4a4a;transform:scaleX(1.0192);z-index:9">Private Investors</div><div class="t" style="left:1307.13px;top:712.90px;font-size:18.90px;line-height:18.90px;color:#111;font-weight:normal;-webkit-text-stroke:0.2px #111;transform:scaleX(0.9636);z-index:9">727,805,084.97 SUI</div><div class="t" style="left:1473.71px;top:714.90px;font-size:16.72px;line-height:16.72px;color:#555;font-weight:normal;-webkit-text-stroke:0.1px #555;transform:scaleX(0.8823);z-index:9">$831.18m</div><div class="t" style="left:1061.48px;top:745.05px;font-size:18.31px;line-height:18.31px;color:#4a4a4a;font-weight:normal;-webkit-text-stroke:0.2px #4a4a4a;transform:scaleX(1.0202);z-index:9">Community</div><div class="t" style="left:1303.51px;top:745.05px;font-size:18.90px;line-height:18.90px;color:#111;font-weight:normal;-webkit-text-stroke:0.2px #111;transform:scaleX(0.9853);z-index:9">204,746,354.28 SUI</div><div class="t" style="left:1473.70px;top:747.05px;font-size:16.72px;line-height:16.72px;color:#555;font-weight:normal;-webkit-text-stroke:0.1px #555;transform:scaleX(0.9725);z-index:9">$233.83m</div><div class="t" style="left:490.17px;top:1169.70px;font-size:17.88px;line-height:17.88px;color:#a6a6a6;font-weight:normal;-webkit-text-stroke:0.2px #a6a6a6;transform:scaleX(1.0234);z-index:5">Release Schedule</div><div class="t" style="left:520.68px;top:1211.50px;font-size:18.02px;line-height:18.02px;color:#111;font-weight:normal;-webkit-text-stroke:0.3px #111;transform:scaleX(1.0309);z-index:5">Others</div><div class="t" style="left:616.47px;top:1211.50px;font-size:18.02px;line-height:18.02px;color:#111;font-weight:normal;-webkit-text-stroke:0.3px #111;transform:scaleX(1.0330);z-index:5">Community</div><div class="t" style="left:750.95px;top:1211.50px;font-size:18.02px;line-height:18.02px;color:#111;font-weight:normal;-webkit-text-stroke:0.3px #111;transform:scaleX(1.0355);z-index:5">Private Investors</div><div class="t" style="left:929.35px;top:1211.50px;font-size:18.02px;line-height:18.02px;color:#111;font-weight:normal;-webkit-text-stroke:0.3px #111;transform:scaleX(1.0388);z-index:5">Founder / Team</div><div class="t" style="left:1098.67px;top:1211.50px;font-size:18.02px;line-height:18.02px;color:#111;font-weight:normal;-webkit-text-stroke:0.3px #111;transform:scaleX(1.0233);z-index:5">Reserve</div>
</body></html>
